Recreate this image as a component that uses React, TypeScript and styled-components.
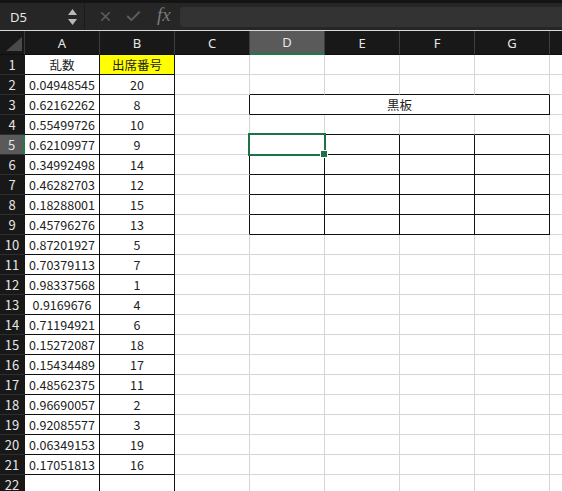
import React from "react";
import styled, { createGlobalStyle } from "styled-components";
import { X, Check } from "lucide-react";

const Global = createGlobalStyle`
  html, body { margin: 0; padding: 0; background: #ffffff; }
  body { width: 562px; height: 491px; overflow: hidden; }
  * { box-sizing: border-box; }
`;

const Window = styled.div`
  width: 562px;
  height: 491px;
  overflow: hidden;
  display: flex;
  flex-direction: column;
  background: #ffffff;
`;

const FormulaBar = styled.div`
  height: 31px;
  flex: none;
  display: flex;
  align-items: stretch;
  background: #262626;
  border-top: 3px solid #141414;
  border-bottom: 1px solid #d8d8d8;
`;

const NameBox = styled.div`
  width: 85px;
  display: flex;
  align-items: center;
  justify-content: space-between;
  padding: 0 7px 0 10px;
  border-right: 1px solid #1b1b1b;
  color: #e8e8e8;
  font: 13px "Noto Sans", "Liberation Sans", sans-serif;
`;

const Stepper = styled.div`
  display: flex;
  flex-direction: column;
  gap: 4px;
`;

const ActionGroup = styled.div`
  width: 95px;
  display: flex;
  align-items: center;
  padding-left: 13px;
  gap: 12px;
  color: #5e5e5e;
`;

const Fx = styled.span`
  font: italic 19px "Liberation Serif", serif;
  color: #7a7a7a;
  margin-left: 3px;
  margin-top: -3px;
`;

const FormulaInput = styled.div`
  flex: 1;
  margin: 4px 0 3px 0;
  background: #333333;
  border-radius: 4px 0 0 4px;
`;

const Sheet = styled.div`
  display: grid;
  grid-template-columns: 25px repeat(8, 75px);
  grid-template-rows: 24px;
  grid-auto-rows: 20px;
  width: 625px;
`;

const Corner = styled.div`
  background: #181818;
  border-right: 1px solid #3a3a3a;
  border-bottom: 1px solid #0e0e0e;
  display: flex;
  align-items: flex-end;
  justify-content: flex-end;
  padding: 0 2px 3px 0;
`;

const ColHead = styled.div<{ $sel?: boolean }>`
  background: ${(p) => (p.$sel ? "#5a5a5a" : "#181818")};
  color: #e6e6e6;
  border-right: 1px solid #3e3e3e;
  border-bottom: ${(p) => (p.$sel ? "2px solid #1f7a4a" : "1px solid #0e0e0e")};
  display: flex;
  align-items: center;
  justify-content: center;
  font: 13px "Noto Sans", "Liberation Sans", sans-serif;
`;

const RowHead = styled.div<{ $sel?: boolean }>`
  background: ${(p) => (p.$sel ? "#5a5a5a" : "#181818")};
  color: #e6e6e6;
  border-bottom: 1px solid #2e2e2e;
  border-right: ${(p) => (p.$sel ? "2px solid #1f7a4a" : "1px solid #181818")};
  display: flex;
  align-items: center;
  justify-content: center;
  font: 13px "Noto Sans CJK JP", "Noto Sans", sans-serif;
  padding-bottom: 1px;
`;

const Cell = styled.div<{
  $right: string;
  $bottom: string;
  $bg?: string;
  $span?: number;
  $raised?: boolean;
}>`
  position: relative;
  z-index: ${(p) => (p.$raised ? 2 : "auto")};
  background: ${(p) => p.$bg || "#ffffff"};
  border-right: 1px solid ${(p) => p.$right};
  border-bottom: 1px solid ${(p) => p.$bottom};
  grid-column: ${(p) => (p.$span ? `span ${p.$span}` : "auto")};
  display: flex;
  align-items: center;
  justify-content: center;
  color: #222222;
  font: 12.5px "Noto Sans CJK JP", "Noto Sans", sans-serif;
  white-space: nowrap;
  padding-bottom: 1px;
`;

const Selection = styled.div`
  position: absolute;
  left: -2px;
  top: -2px;
  width: 78px;
  height: 23px;
  border: 2px solid #1f7245;
  pointer-events: none;
`;

const FillHandle = styled.div`
  position: absolute;
  right: -4px;
  bottom: -4px;
  width: 6px;
  height: 6px;
  background: #1f7245;
  border: 1px solid #ffffff;
  box-sizing: content-box;
`;

const COLS = ["A", "B", "C", "D", "E", "F", "G", "H"];

const DATA: [string, string][] = [
  ["乱数", "出席番号"],
  ["0.04948545", "20"],
  ["0.62162262", "8"],
  ["0.55499726", "10"],
  ["0.62109977", "9"],
  ["0.34992498", "14"],
  ["0.46282703", "12"],
  ["0.18288001", "15"],
  ["0.45796276", "13"],
  ["0.87201927", "5"],
  ["0.70379113", "7"],
  ["0.98337568", "1"],
  ["0.9169676", "4"],
  ["0.71194921", "6"],
  ["0.15272087", "18"],
  ["0.15434489", "17"],
  ["0.48562375", "11"],
  ["0.96690057", "2"],
  ["0.92085577", "3"],
  ["0.06349153", "19"],
  ["0.17051813", "16"],
  ["", ""],
];

const GRID = "#d6d6d6";
const BLACK = "#111111";

const bordered = (r: number, c: number) =>
  (c <= 1 && r >= 1 && r <= 23) ||
  (r === 3 && c >= 3 && c <= 6) ||
  (r >= 5 && r <= 9 && c >= 3 && c <= 6);

const rightColor = (r: number, c: number) =>
  bordered(r, c) || bordered(r, c + 1) ? BLACK : GRID;
const bottomColor = (r: number, c: number) =>
  bordered(r, c) || bordered(r + 1, c) ? BLACK : GRID;

const Triangle = ({ up }: { up?: boolean }) => (
  <svg width="9" height="6" viewBox="0 0 9 6">
    <path d={up ? "M4.5 0 L9 6 L0 6 Z" : "M0 0 L9 0 L4.5 6 Z"} fill="#b8b8b8" />
  </svg>
);

export default function App() {
  const rows: React.ReactNode[] = [];
  for (let r = 1; r <= 22; r++) {
    rows.push(
      <RowHead key={`rh${r}`} $sel={r === 5}>
        {r}
      </RowHead>
    );
    for (let c = 0; c < COLS.length; c++) {
      if (r === 3 && c === 3) {
        rows.push(
          <Cell key={`c${r}-${c}`} $span={4} $right={BLACK} $bottom={BLACK}>
            黒板
          </Cell>
        );
        c = 6;
        continue;
      }
      const text = c <= 1 ? DATA[r - 1][c] : "";
      const active = r === 5 && c === 3;
      rows.push(
        <Cell
          key={`c${r}-${c}`}
          $right={rightColor(r, c)}
          $bottom={bottomColor(r, c)}
          $bg={r === 1 && c === 1 ? "#ffff00" : undefined}
          $raised={active}
        >
          {text}
          {active && (
            <Selection>
              <FillHandle />
            </Selection>
          )}
        </Cell>
      );
    }
  }

  return (
    <Window>
      <Global />
      <FormulaBar>
        <NameBox>
          <span>D5</span>
          <Stepper>
            <Triangle up />
            <Triangle />
          </Stepper>
        </NameBox>
        <ActionGroup>
          <X size={15} strokeWidth={2.6} />
          <Check size={17} strokeWidth={2.6} />
          <Fx>fx</Fx>
        </ActionGroup>
        <FormulaInput />
      </FormulaBar>
      <Sheet>
        <Corner>
          <svg width="16" height="14" viewBox="0 0 16 14">
            <path d="M16 0 L16 14 L0 14 Z" fill="#4a4a4a" />
          </svg>
        </Corner>
        {COLS.map((l, i) => (
          <ColHead key={l} $sel={i === 3}>
            {l}
          </ColHead>
        ))}
        {rows}
      </Sheet>
    </Window>
  );
}
